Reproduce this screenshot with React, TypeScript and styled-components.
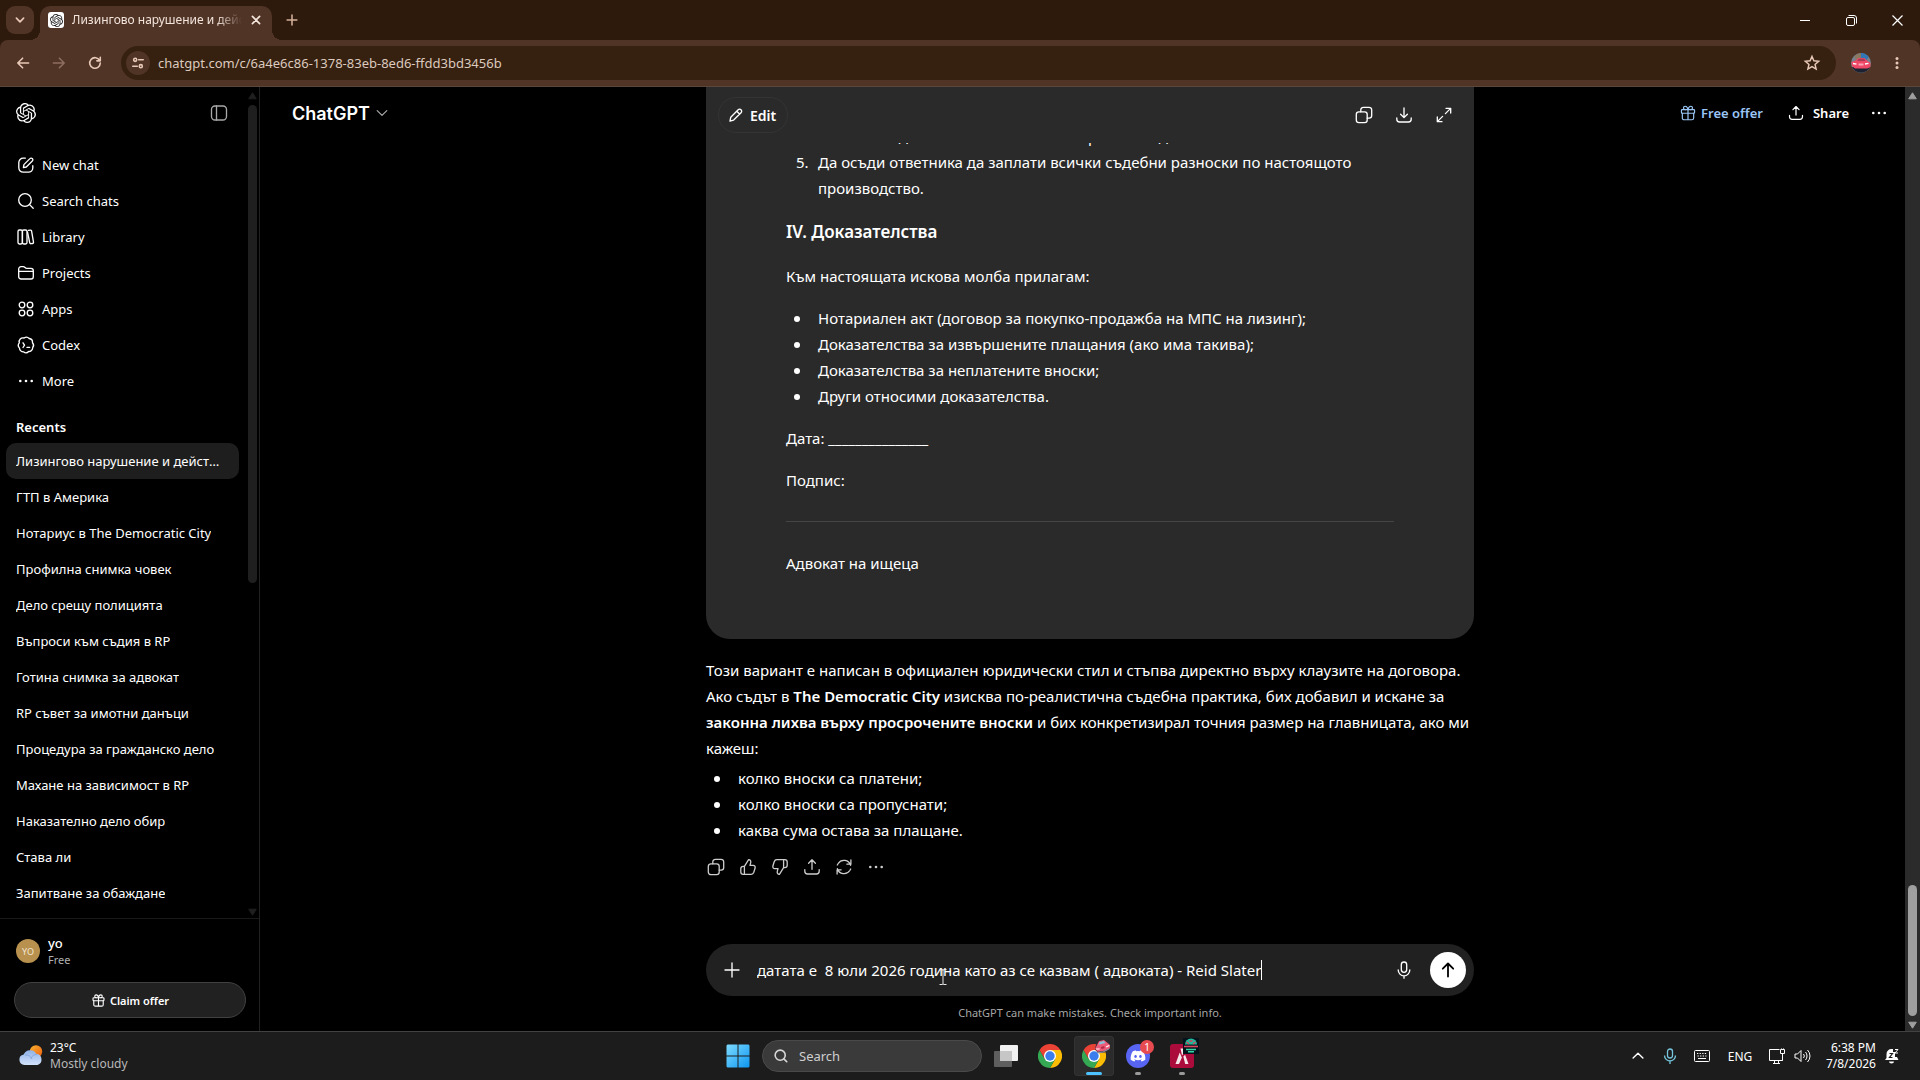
import React from "react";
import styled, { createGlobalStyle, css } from "styled-components";
import { SiOpenai } from "react-icons/si";
import { FaDiscord } from "react-icons/fa";

const GlobalStyle = createGlobalStyle`
  * { box-sizing: border-box; }
  html, body, #root { height: 100%; margin: 0; }
  body { background: #000; color: #fff; overflow: hidden; }
  body, button, input { font-family: "Noto Sans", "Open Sans", sans-serif; }
  button { background: none; border: 0; padding: 0; color: inherit; cursor: pointer; }
  a { color: inherit; text-decoration: none; }
  ul, ol, p, h1, h2, h3 { margin: 0; padding: 0; list-style: none; }
  svg { display: block; flex: none; }
`;

const Screen = styled.div`
  display: flex;
  flex-direction: column;
  height: 100vh;
`;

/* ---------- icons ---------- */

type IconProps = { size?: number; width?: number; children: React.ReactNode };

const Icon = ({ size = 20, width = 1.33, children }: IconProps) => (
  <svg width={size} height={size} viewBox="0 0 20 20" fill="none" stroke="currentColor"
    strokeWidth={width} strokeLinecap="round" strokeLinejoin="round" aria-hidden="true">
    {children}
  </svg>
);

const icons = {
  compose: <><path d="M9.3 3.2H7.2a4.4 4.4 0 0 0-4.4 4.4v5.2a4.4 4.4 0 0 0 4.4 4.4h5.2a4.4 4.4 0 0 0 4.4-4.4v-2.1" /><path d="M7.9 9.6l6-6a1.65 1.65 0 0 1 2.4 0 1.65 1.65 0 0 1 0 2.4l-6 6-2.9.6z" /></>,
  search: <><circle cx="9" cy="9" r="6.3" /><path d="M13.6 13.6l3.6 3.6" /></>,
  library: <><rect x="2" y="3" width="4.4" height="14" rx="1.4" /><rect x="6.4" y="3" width="4.6" height="14" rx="1.4" /><path d="M12.4 3.4l1.8-.3a1.2 1.2 0 0 1 1.4 1l1.9 11a1.2 1.2 0 0 1-1 1.4l-1.4.2a1.2 1.2 0 0 1-1.4-1L11.5 5" /></>,
  folder: <path d="M2.7 8.3h14.6M2.7 6a2.3 2.3 0 0 1 2.3-2.3h2.3c1.6 0 1.8 1.6 3.3 1.6H15a2.3 2.3 0 0 1 2.3 2.3v6.1a2.3 2.3 0 0 1-2.3 2.3H5a2.3 2.3 0 0 1-2.3-2.3z" />,
  apps: <><circle cx="6" cy="6" r="2.8" /><circle cx="14" cy="6" r="2.8" /><circle cx="6" cy="14" r="2.8" /><circle cx="14" cy="14" r="2.8" /></>,
  codex: <><path d="M8.1 3a3.9 3.9 0 0 1 5.1.5 3.9 3.9 0 0 1 3.3 4.2 3.9 3.9 0 0 1 .2 5 3.9 3.9 0 0 1-4 3.8 3.9 3.9 0 0 1-5.2.3 3.9 3.9 0 0 1-4-3.7 3.9 3.9 0 0 1-.2-5.2A3.9 3.9 0 0 1 8.1 3z" /><path d="M7 7.8l1.5 2.4L7 12.5M11 12.4h2.6" /></>,
  more: <g fill="currentColor" stroke="none"><circle cx="4.3" cy="10" r="1.3" /><circle cx="10" cy="10" r="1.3" /><circle cx="15.7" cy="10" r="1.3" /></g>,
  panel: <><rect x="2.5" y="3" width="15" height="14" rx="3.5" /><path d="M7.5 3v14" /></>,
  gift: <><rect x="2.7" y="6.3" width="14.6" height="4" rx="1" /><path d="M3.7 10.3v5.2a2 2 0 0 0 2 2h8.6a2 2 0 0 0 2-2v-5.2M10 6.3v11.2M10 6.3C9.5 3.8 8.3 2.5 6.9 2.5a1.9 1.9 0 0 0 0 3.8M10 6.3c.5-2.5 1.7-3.8 3.1-3.8a1.9 1.9 0 0 1 0 3.8" /></>,
  upload: <><path d="M10 12.3V3M6.6 6.2L10 2.8l3.4 3.4" /><path d="M2.8 12.6v1.6a2.8 2.8 0 0 0 2.8 2.8h8.8a2.8 2.8 0 0 0 2.8-2.8v-1.6" /></>,
  download: <><path d="M10 3v9.3M6.6 9.2l3.4 3.4 3.4-3.4" /><path d="M2.8 13v1.2a2.8 2.8 0 0 0 2.8 2.8h8.8a2.8 2.8 0 0 0 2.8-2.8V13" /></>,
  pencil: <path d="M3.3 16.7l.9-4.3 8.2-8.2a2.2 2.2 0 0 1 3.2 0 2.2 2.2 0 0 1 0 3.2l-8.2 8.2zM10.8 5.8L14 9" />,
  copy: <><rect x="2.3" y="6.8" width="10.9" height="10.9" rx="2.6" /><path d="M6.8 6.8V4.9a2.6 2.6 0 0 1 2.6-2.6h5.7a2.6 2.6 0 0 1 2.6 2.6v5.7a2.6 2.6 0 0 1-2.6 2.6h-1.9" /></>,
  expand: <path d="M12 3.3h4.7V8M16.4 3.6l-5 5M8 16.7H3.3V12M3.6 16.4l5-5" />,
  thumb: <path d="M6.4 9.3L10.6 2.7c1.8 0 2.5 1.5 2.1 3l-.7 2.6h3.1c1.6 0 2.4 1.3 2 2.7l-1.3 4.3c-.4 1.2-1.3 2-2.6 2H5.2a2.4 2.4 0 0 1-2.4-2.4v-3.2a2.4 2.4 0 0 1 2.4-2.4h1.2zM6.4 9.5v7.6" />,
  regen: <path d="M16.6 8.3A6.9 6.9 0 0 0 4.2 6.5L3.3 8M16.9 3v4.2h-4M3.4 11.7a6.9 6.9 0 0 0 12.4 1.8l.9-1.5M3.1 17v-4.2h4" />,
  chevron: <path d="M4 7l6 6 6-6" />,
  plus: <path d="M10 3v14M3 10h14" />,
  mic: <><rect x="7.3" y="2" width="5.4" height="10.3" rx="2.7" /><path d="M4.2 10a5.8 5.8 0 0 0 11.6 0M10 15.8v2.4" /></>,
  arrowUp: <path d="M10 16.5v-13M4.8 8.7L10 3.5l5.2 5.2" />,
  back: <path d="M17 10H3.5M9.5 4l-6 6 6 6" />,
  forward: <path d="M3 10h13.5M10.5 4l6 6-6 6" />,
  reload: <path d="M15.8 6.8A6.6 6.6 0 1 0 16.6 10M16.6 3v4.3h-4.3" />,
  tune: <><circle cx="6" cy="5.5" r="2.2" /><path d="M11 5.5h6.5M2.5 14.5H9" /><circle cx="14" cy="14.5" r="2.2" /></>,
  star: <path strokeLinejoin="miter" d="M10 2.7l2.1 4.9 5.3.5-4 3.5 1.2 5.2-4.6-2.800-4.6 2.800 1.200-5.200-4-3.500 5.300-.5z" />,
  close: <path d="M4 4l12 12M16 4L4 16" />,
};

/* ---------- browser window ---------- */

const TabStrip = styled.div`
  display: flex;
  align-items: center;
  height: 40px;
  flex: none;
  padding-left: 6px;
  background: #2d1a0d;
  color: #e9c9b8;
`;

const TabSearch = styled.button`
  display: grid;
  place-items: center;
  width: 28px;
  height: 28px;
  border-radius: 9px;
  background: #503426;
`;

const Tab = styled.div`
  position: relative;
  display: flex;
  align-items: center;
  gap: 8px;
  align-self: flex-end;
  width: 232px;
  height: 34px;
  margin-left: 6px;
  padding: 0 10px 6px 8px;
  border-radius: 10px 10px 0 0;
  background: #503426;
  color: #f3e4dc;

  &::before, &::after {
    content: "";
    position: absolute;
    bottom: 0;
    width: 10px;
    height: 10px;
  }
  &::before { left: -10px; background: radial-gradient(circle at 0 0, transparent 10px, #503426 10px); }
  &::after { right: -10px; background: radial-gradient(circle at 100% 0, transparent 10px, #503426 10px); }
`;

const Favicon = styled.span`
  display: grid;
  place-items: center;
  width: 16px;
  height: 16px;
  flex: none;
  border-radius: 3px;
  background: #fff;
  color: #222;
`;

const TabTitle = styled.span`
  flex: 1;
  overflow: hidden;
  white-space: nowrap;
  font-size: 12px;
  line-height: 16px;
  mask-image: linear-gradient(90deg, #000 85%, transparent);
`;

const NewTab = styled.button`
  margin-left: 13px;
  color: #d5b09c;
`;

const WindowControls = styled.div`
  display: flex;
  margin-left: auto;
  color: #fff;
`;

const WindowButton = styled.button`
  display: grid;
  place-items: center;
  width: 46px;
  height: 28px;
`;

const Toolbar = styled.div`
  display: flex;
  align-items: center;
  height: 47px;
  flex: none;
  padding: 0 15px 0 13px;
  border-bottom: 1px solid #5b463b;
  border-radius: 8px 8px 0 0;
  background: #503426;
  color: #e9c9b8;
`;

const ToolbarBackdrop = styled.div`
  background: #2d1a0d;
`;

const NavButton = styled.button`
  display: grid;
  place-items: center;
  width: 20px;
  height: 34px;
  margin-right: 16px;
  &:disabled { color: #8d6e60; }
`;

const Omnibox = styled.label`
  display: flex;
  align-items: center;
  flex: 1;
  height: 34px;
  margin-right: 15px;
  padding: 0 15px 0 5px;
  gap: 8px;
  border-radius: 17px;
  background: #36200f;
`;

const SiteInfo = styled.span`
  display: grid;
  place-items: center;
  width: 24px;
  height: 24px;
  border-radius: 50%;
  background: #503426;
`;

const AddressInput = styled.input`
  flex: 1;
  min-width: 0;
  padding: 0;
  border: 0;
  outline: 0;
  background: none;
  color: #dccabf;
  font-size: 13px;
`;

const ProfileButton = styled.button`
  margin-right: 18px;
`;

/* ---------- page ---------- */

const Page = styled.div`
  display: flex;
  flex: 1;
  min-height: 0;
`;

const SidebarBox = styled.aside`
  display: flex;
  flex-direction: column;
  width: 260px;
  flex: none;
  border-right: 1px solid #212121;
`;

const SidebarTop = styled.div`
  display: flex;
  flex: 1;
  min-height: 0;
  overflow: hidden;
`;

const SidebarContent = styled.div`
  flex: 1;
  min-width: 0;
  padding: 0 9px 0 6px;
`;

const SidebarHeader = styled.div`
  display: flex;
  align-items: center;
  justify-content: space-between;
  height: 52px;
  margin-bottom: 8px;
  padding: 0 10px;
`;

const SidebarToggle = styled.button`
  color: #a8a8a8;
`;

const sideRow = css`
  display: flex;
  align-items: center;
  gap: 6px;
  height: 36px;
  padding: 0 15px 0 10px;
  border-radius: 10px;
  font-size: 13px;
  line-height: 20px;
`;

const NavLink = styled.a`
  ${sideRow}
`;

const RecentsTitle = styled.h2`
  margin: 18px 0 6px;
  padding: 0 10px;
  font-size: 13px;
  font-weight: 600;
  line-height: 20px;
`;

const ChatLink = styled.a<{ $active?: boolean }>`
  ${sideRow}
  background: ${(p) => (p.$active ? "#1e1e1e" : "none")};
  span {
    overflow: hidden;
    white-space: nowrap;
    text-overflow: ellipsis;
  }
`;

const ScrollTrack = styled.div<{ $main?: boolean }>`
  display: flex;
  flex-direction: column;
  align-items: ${(p) => (p.$main ? "center" : "flex-start")};
  width: ${(p) => (p.$main ? 15 : 11)}px;
  flex: none;
  padding: 5px 0 2px;
  gap: 5px;
  background: ${(p) => (p.$main ? "#2b2b2b" : "none")};
  color: ${(p) => (p.$main ? "#9f9f9f" : "#1f1f1f")};
`;

const ScrollThumb = styled.div<{ $size: number }>`
  width: 9px;
  height: ${(p) => p.$size}%;
  border-radius: 5px;
  background: currentColor;
`;

const ScrollSpace = styled.div`
  flex: 1;
`;

const Account = styled.div`
  padding: 14px 13px 13px 14px;
  border-top: 1px solid #191919;
`;

const AccountRow = styled.button`
  display: flex;
  align-items: center;
  gap: 8px;
  height: 36px;
  margin-bottom: 13px;
  padding: 0 2px;
  text-align: left;
`;

const Avatar = styled.span`
  display: grid;
  place-items: center;
  width: 24px;
  height: 24px;
  border-radius: 50%;
  background: #b8914f;
  color: #f3e6cf;
  font-size: 9px;
`;

const AccountName = styled.span`
  display: block;
  font-size: 13px;
  font-weight: 500;
  line-height: 18px;
`;

const AccountPlan = styled.span`
  display: block;
  color: #afafaf;
  font-size: 11px;
  line-height: 16px;
`;

const ClaimButton = styled.button`
  display: flex;
  align-items: center;
  justify-content: center;
  gap: 4px;
  width: 100%;
  height: 36px;
  border: 1px solid #414141;
  border-radius: 18px;
  background: #212121;
  font-size: 11px;
  font-weight: 600;
`;

const Main = styled.main`
  display: grid;
  grid-template-columns: 1fr minmax(0, 768px) 1fr;
  flex: 1;
  min-width: 0;
`;

const ModelButton = styled.button`
  display: flex;
  align-items: center;
  gap: 4px;
  height: 52px;
  margin-left: 32px;
  font-family: Inter, "Liberation Sans", sans-serif;
  font-size: 18px;
  font-weight: 600;
  svg { color: #a8a8a8; }
`;

const RightSide = styled.div`
  display: flex;
  justify-content: flex-end;
  min-width: 0;
`;

const HeaderActions = styled.div`
  display: flex;
  align-items: center;
  height: 52px;
  gap: 24px;
  padding-right: 16px;
`;

const HeaderButton = styled.button<{ $accent?: boolean; $gap: number }>`
  display: flex;
  align-items: center;
  gap: ${(p) => p.$gap}px;
  color: ${(p) => (p.$accent ? "#9ac5f5" : "#fff")};
  font-size: 13px;
  font-weight: 600;
`;

const OptionsButton = styled.button`
  margin-left: -4px;
`;

const Thread = styled.section`
  display: flex;
  flex-direction: column;
  min-height: 0;
  font-size: 15px;
  line-height: 26px;
`;

const DocumentCard = styled.article`
  border-radius: 0 0 24px 24px;
  background: #2a2a2a;
`;

const DocumentBar = styled.div`
  display: flex;
  align-items: center;
  justify-content: space-between;
  height: 56px;
  padding: 0 20px 0 12px;
`;

const EditButton = styled.button`
  display: flex;
  align-items: center;
  gap: 5px;
  height: 36px;
  padding: 0 11px 0 8px;
  border: 1px solid #343434;
  border-radius: 18px;
  font-size: 14px;
  font-weight: 600;
`;

const IconRow = styled.div`
  display: flex;
  gap: 20px;
`;

const DocumentBody = styled.div`
  overflow: hidden;
  padding: 0 80px 63px;
  p { margin-top: 16px; }
`;

const OrderedList = styled.ol`
  margin-top: -20px;
  li { display: flex; }
  li > span { width: 32px; flex: none; padding-left: 10px; }
`;

const Heading = styled.h3`
  margin-top: 16px;
  font-size: 17px;
  font-weight: 600;
  line-height: 30px;
`;

const BulletList = styled.ul<{ $gap: number }>`
  margin-top: ${(p) => p.$gap}px;
  li { display: flex; }
  li::before {
    content: "";
    width: 6px;
    height: 6px;
    margin: 11px 18px 0 8px;
    border-radius: 50%;
    background: #fff;
  }
`;

const Rule = styled.hr`
  height: 1px;
  margin: 28px 0;
  border: 0;
  background: #454545;
`;

const Answer = styled.p`
  margin-top: 18px;
  strong { font-weight: 600; }
`;

const ReplyActions = styled.div`
  display: flex;
  margin-top: 8px;
  color: #cdcdcd;
`;

const ReplyButton = styled.button`
  display: grid;
  place-items: center;
  width: 32px;
  height: 32px;
  margin-left: -6px;
  margin-right: 6px;
`;

const Composer = styled.form`
  display: flex;
  align-items: center;
  height: 52px;
  margin-top: auto;
  padding: 0 8px 0 16px;
  border-radius: 26px;
  background: #212121;
`;

const PromptArea = styled.div`
  position: relative;
  display: flex;
  align-items: center;
  flex: 1;
  min-width: 0;
  margin-left: 15px;
`;

const PromptInput = styled.input`
  field-sizing: content;
  padding: 0;
  border: 0;
  outline: 0;
  background: none;
  color: #fff;
  font-size: 15px;
  line-height: 26px;
`;

const Caret = styled.span`
  width: 1px;
  height: 20px;
  background: #fff;
`;

const Pointer = styled.svg`
  position: absolute;
  left: 182px;
  top: 12px;
`;

const SendButton = styled.button`
  display: grid;
  place-items: center;
  width: 36px;
  height: 36px;
  margin-left: 16px;
  border-radius: 50%;
  background: #fff;
  color: #000;
`;

const Disclaimer = styled.p`
  padding: 9px 0 10px;
  color: #a6a6a6;
  font-size: 11px;
  line-height: 16px;
  text-align: center;
`;

/* ---------- taskbar ---------- */

const Taskbar = styled.footer`
  display: grid;
  grid-template-columns: 1fr auto 1fr;
  align-items: center;
  height: 49px;
  flex: none;
  border-top: 1px solid #424242;
  background: #1c1c1c;
`;

const Weather = styled.button`
  display: flex;
  align-items: center;
  justify-self: start;
  gap: 6px;
  margin-left: 18px;
  text-align: left;
  font-size: 12px;
  line-height: 16px;
  span { display: block; }
  span + span { color: #b9b9b9; }
`;

const AppRow = styled.div`
  display: flex;
  align-items: center;
  gap: 4px;
`;

const AppButton = styled.button<{ $active?: boolean; $mark?: string; $markWidth?: number }>`
  position: relative;
  display: grid;
  place-items: center;
  width: 40px;
  height: 40px;
  border-radius: 4px;
  background: ${(p) => (p.$active ? "#2b2b2b" : "none")};
  box-shadow: ${(p) => (p.$active ? "inset 0 0 0 1px #333" : "none")};
  &::after {
    content: "";
    position: absolute;
    bottom: 1px;
    width: ${(p) => p.$markWidth ?? 0}px;
    height: 3px;
    border-radius: 2px;
    background: ${(p) => p.$mark ?? "none"};
  }
`;

const Overlay = styled.span<{ $right: number }>`
  position: absolute;
  top: 2px;
  right: ${(p) => p.$right}px;
`;

const CountBadge = styled.span`
  position: absolute;
  top: 4px;
  right: 4px;
  width: 14px;
  height: 14px;
  border-radius: 50%;
  background: #e84b4f;
  font-size: 10px;
  line-height: 14px;
`;

const DiscordDisc = styled.span`
  display: grid;
  place-items: center;
  width: 24px;
  height: 24px;
  border-radius: 50%;
  background: #5865f2;
`;

const TaskSearch = styled.label`
  display: flex;
  align-items: center;
  gap: 10px;
  width: 220px;
  height: 32px;
  padding: 0 10px;
  border: 1px solid #4a4a4a;
  border-radius: 16px;
  background: #3a3a3a;
  color: #d8d8d8;
  input {
    flex: 1;
    min-width: 0;
    padding: 0;
    border: 0;
    outline: 0;
    background: none;
    color: #fff;
    font-size: 13px;
  }
  input::placeholder { color: #cfcfcf; opacity: 1; }
`;

const Tray = styled.div`
  display: flex;
  align-items: center;
  justify-self: end;
  padding-right: 20px;
`;

const TrayButton = styled.button<{ $w?: number }>`
  display: grid;
  place-items: center;
  width: ${(p) => p.$w ?? 32}px;
  height: 32px;
  font-size: 12px;
`;

const Clock = styled.button`
  width: 64px;
  margin-right: 8px;
  font-size: 12px;
  line-height: 16px;
  text-align: right;
  span { display: block; }
`;

/* ---------- drawings ---------- */

const CarPicture = ({ size, round }: { size: number; round?: boolean }) => (
  <svg width={size} height={size} viewBox="0 0 20 20" aria-hidden="true">
    {round ? (
      <>
        <circle cx="10" cy="10" r="10" fill="#77808c" />
        <path d="M9 0a10 10 0 0 1 8.500 4L15 8H9z" fill="#3277b5" />
        <path d="M3.500 3.500A10 10 0 0 1 10 0v7H5z" fill="#8b7860" />
        <path d="M1 14h18a10 10 0 0 1-18 0z" fill="#1c2230" />
        <path d="M.5 9l4-1.500L7.500 5h6l3 3 3 2-.2 4-3 1.500H4L.8 13z" fill="#ef4766" />
        <path d="M6 8l2-2.300h5L14.500 8z" fill="#a83a56" />
        <path d="M2 10.500l3.500.6M14 11l3.500-.6" stroke="#fff" strokeWidth="1.300" />
        <path d="M7.500 10.500h5v2h-5z" fill="#f9a5b5" />
      </>
    ) : (
      <g transform="rotate(-14 10 10)">
        <path d="M.5 11L3 6.500C5 2.500 8 1.500 12 2c4 .5 6 3.500 7 8l-1 5-7 2.500-8-1z" fill="#3b2c35" />
        <path d="M1 10.500l3-3.500 3.500-4h6l3 4 2.500 3.500-1 3.500-7 1.500-8-1z" fill="#ee5b78" />
        <path d="M6 7l2-3h5l1.500 3z" fill="#83c4da" />
        <path d="M2 11l4 1M14 11.500l4-.8" stroke="#fff" strokeWidth="1.300" />
        <path d="M3 15.500l6 1 8-2" stroke="#99a2b5" strokeWidth="1" fill="none" />
        <path d="M8 10h4v2.500H8z" fill="#b32d4b" />
      </g>
    )}
  </svg>
);

const ChromeLogo = () => (
  <svg width="24" height="24" viewBox="0 0 24 24" aria-hidden="true">
    <path d="M12 6h10.400A12 12 0 0 1 12 24l5.200-9z" fill="#fbbc04" />
    <path d="M1.600 6A12 12 0 0 0 12 24l5.200-9H6.800z" fill="#34a853" />
    <path d="M1.600 6a12 12 0 0 1 20.800 0H12L6.800 15z" fill="#ea4335" />
    <circle cx="12" cy="12" r="6" fill="#fff" />
    <circle cx="12" cy="12" r="4.700" fill="#3b7ded" />
  </svg>
);

const WeatherPicture = () => (
  <svg width="26" height="24" viewBox="0 0 26 24" aria-hidden="true">
    <defs>
      <linearGradient id="sun" x1="0" y1="0" x2="1" y2="1"><stop stopColor="#f9b32f" /><stop offset="1" stopColor="#ef5f12" /></linearGradient>
      <linearGradient id="cloud" x1="0" y1="0" x2="0" y2="1"><stop stopColor="#8fb2e8" /><stop offset="1" stopColor="#d3e2fb" /></linearGradient>
    </defs>
    <circle cx="18" cy="7.500" r="6.200" fill="url(#sun)" />
    <path d="M6.500 21a5.300 5.300 0 0 1-.8-10.500 7 7 0 0 1 12.500-.8A5.800 5.800 0 0 1 19.500 21z" fill="url(#cloud)" />
    <path d="M7 11a7 7 0 0 1 7 4M19 10.500a6 6 0 0 0-6 4" fill="none" stroke="#86a9e0" />
  </svg>
);

const StartLogo = () => (
  <svg width="24" height="24" viewBox="0 0 24 24" aria-hidden="true">
    <defs><linearGradient id="win" x1="0" y1="0" x2="24" y2="24" gradientUnits="userSpaceOnUse"><stop stopColor="#80dcff" /><stop offset="1" stopColor="#0b95f0" /></linearGradient></defs>
    <path d="M1.500 .5h10v11H.5v-10zM12.500 .5h10l1 1v10h-11zM.5 12.500h11v11h-10l-1-1zM12.500 12.500h11v10l-1 1h-10z" fill="url(#win)" />
  </svg>
);

const TaskViewLogo = () => (
  <svg width="24" height="24" viewBox="0 0 24 24" aria-hidden="true">
    <rect x="6" y="1" width="18" height="16" rx="1" fill="#f1f1f1" />
    <rect x="0" y="7" width="18" height="16" rx="1" fill="#5f5f5f" />
    <rect x="6" y="7" width="12" height="10" fill="#c6c6c6" />
  </svg>
);

const LauncherLogo = () => (
  <svg width="24" height="24" viewBox="0 0 24 24" aria-hidden="true">
    <rect width="24" height="24" rx="3" fill="#ab0c3b" />
    <path d="M10.500 4.500h2.600l1.300 4-2.400 3zM9.700 8.500l2.200 5L9 20H5.500zM13.300 12.500l1.800-1.800L18.500 20h-3.300z" fill="#f5e8ea" />
  </svg>
);

const ServerBadge = () => (
  <svg width="16" height="16" viewBox="0 0 16 16" aria-hidden="true">
    <rect width="16" height="16" fill="#04121c" />
    <path d="M2 6.500a6 6 0 0 1 12 0z" fill="#22b99a" />
    <path d="M3.500 4l2.500 2M10 6l2.500-2M6.500 3h3" stroke="#d9405a" strokeWidth="1.300" />
    <path d="M1 8.500h14" stroke="#d7475f" strokeWidth="1.600" />
    <path d="M3 11.500h10M5 13.700h6" stroke="#35d6a6" strokeWidth="1.400" />
  </svg>
);

const UpArrow = () => <svg width="9" height="8" viewBox="0 0 9 8" aria-hidden="true"><path d="M4.500 .8L8.300 6.800H.7z" fill="currentColor" stroke="currentColor" strokeLinejoin="round" /></svg>;
const DownArrow = () => <svg width="9" height="8" viewBox="0 0 9 8" aria-hidden="true"><path d="M4.500 7.200L8.300 1.200H.7z" fill="currentColor" stroke="currentColor" strokeLinejoin="round" /></svg>;

/* ---------- content ---------- */

const navItems: [string, React.ReactNode][] = [
  ["New chat", icons.compose],
  ["Search chats", icons.search],
  ["Library", icons.library],
  ["Projects", icons.folder],
  ["Apps", icons.apps],
  ["Codex", icons.codex],
  ["More", icons.more],
];

const chats = [
  "Лизингово нарушение и действия",
  "ГТП в Америка",
  "Нотариус в The Democratic City",
  "Профилна снимка човек",
  "Дело срещу полицията",
  "Въпроси към съдия в RP",
  "Готина снимка за адвокат",
  "RP съвет за имотни данъци",
  "Процедура за гражданско дело",
  "Махане на зависимост в RP",
  "Наказателно дело обир",
  "Става ли",
  "Запитване за обаждане",
];

const BrowserChrome = () => (
  <>
    <TabStrip>
      <TabSearch aria-label="Search tabs"><Icon size={12} width={2.8}>{icons.chevron}</Icon></TabSearch>
      <Tab>
        <Favicon><SiOpenai size={13} /></Favicon>
        <TabTitle>Лизингово нарушение и действия</TabTitle>
        <button aria-label="Close tab"><Icon size={12} width={2.8}>{icons.close}</Icon></button>
      </Tab>
      <NewTab aria-label="New tab"><Icon size={14} width={2.2}>{icons.plus}</Icon></NewTab>
      <WindowControls>
        <WindowButton aria-label="Minimize"><svg width="10" height="10"><path d="M0 5.5h10" stroke="currentColor" /></svg></WindowButton>
        <WindowButton aria-label="Restore"><svg width="11" height="11" fill="none" stroke="currentColor"><rect x=".5" y="2.5" width="8" height="8" rx="1.5" /><path d="M2.5 .5H8a2.5 2.5 0 0 1 2.5 2.5v5.5" /></svg></WindowButton>
        <WindowButton aria-label="Close"><svg width="11" height="11" stroke="currentColor" strokeWidth="1.2"><path d="M.5 .5l10 10M10.5 .5l-10 10" /></svg></WindowButton>
      </WindowControls>
    </TabStrip>
    <ToolbarBackdrop>
      <Toolbar>
        <NavButton aria-label="Back"><Icon size={16} width={2}>{icons.back}</Icon></NavButton>
        <NavButton aria-label="Forward" disabled><Icon size={16} width={2}>{icons.forward}</Icon></NavButton>
        <NavButton aria-label="Reload"><Icon size={16} width={2}>{icons.reload}</Icon></NavButton>
        <Omnibox>
          <SiteInfo><Icon size={14} width={2.2}>{icons.tune}</Icon></SiteInfo>
          <AddressInput aria-label="Address" defaultValue="chatgpt.com/c/6a4e6c86-1378-83eb-8ed6-ffdd3bd3456b" />
          <button aria-label="Bookmark this page"><Icon size={18} width={1.6}>{icons.star}</Icon></button>
        </Omnibox>
        <ProfileButton aria-label="Profile"><CarPicture size={20} round /></ProfileButton>
        <button aria-label="Browser menu"><svg width="16" height="16" fill="currentColor"><circle cx="8" cy="3.500" r="1.500" /><circle cx="8" cy="8" r="1.500" /><circle cx="8" cy="12.500" r="1.500" /></svg></button>
      </Toolbar>
    </ToolbarBackdrop>
  </>
);

const Sidebar = () => (
  <SidebarBox>
    <SidebarTop>
      <SidebarContent>
        <SidebarHeader>
          <a href="#home" aria-label="Home"><SiOpenai size={20} /></a>
          <SidebarToggle aria-label="Close sidebar"><Icon>{icons.panel}</Icon></SidebarToggle>
        </SidebarHeader>
        <nav>
          {navItems.map(([label, glyph]) => (
            <NavLink href="#nav" key={label}><Icon>{glyph}</Icon>{label}</NavLink>
          ))}
        </nav>
        <RecentsTitle>Recents</RecentsTitle>
        {chats.map((title, i) => (
          <ChatLink href="#chat" key={title} $active={i === 0}><span>{title}</span></ChatLink>
        ))}
      </SidebarContent>
      <ScrollTrack>
        <UpArrow />
        <ScrollThumb $size={58} />
        <ScrollSpace />
        <DownArrow />
      </ScrollTrack>
    </SidebarTop>
    <Account>
      <AccountRow>
        <Avatar>YO</Avatar>
        <span><AccountName>yo</AccountName><AccountPlan>Free</AccountPlan></span>
      </AccountRow>
      <ClaimButton><Icon size={15} width={1.5}>{icons.gift}</Icon>Claim offer</ClaimButton>
    </Account>
  </SidebarBox>
);

const Document = () => (
  <DocumentCard>
    <DocumentBar>
      <EditButton><Icon size={18} width={1.5}>{icons.pencil}</Icon>Edit</EditButton>
      <IconRow>
        <button aria-label="Copy"><Icon>{icons.copy}</Icon></button>
        <button aria-label="Download"><Icon>{icons.download}</Icon></button>
        <button aria-label="Expand"><Icon>{icons.expand}</Icon></button>
      </IconRow>
    </DocumentBar>
    <DocumentBody>
      <OrderedList>
        <li><span />вземането дължимо неизплатено в срока към дата</li>
        <li><span>5.</span>Да осъди ответника да заплати всички съдебни разноски по настоящото производство.</li>
      </OrderedList>
      <Heading>IV. Доказателства</Heading>
      <p>Към настоящата искова молба прилагам:</p>
      <BulletList $gap={16}>
        <li>Нотариален акт (договор за покупко-продажба на МПС на лизинг);</li>
        <li>Доказателства за извършените плащания (ако има такива);</li>
        <li>Доказателства за неплатените вноски;</li>
        <li>Други относими доказателства.</li>
      </BulletList>
      <p>Дата: _______________</p>
      <p>Подпис:</p>
      <Rule />
      <div>Адвокат на ищеца</div>
    </DocumentBody>
  </DocumentCard>
);

const Chat = () => (
  <Main>
    <div>
      <ModelButton>ChatGPT<Icon size={16} width={1.5}>{icons.chevron}</Icon></ModelButton>
    </div>
    <Thread>
      <Document />
      <Answer>
        Този вариант е написан в официален юридически стил и стъпва директно върху клаузите на договора. Ако съдът в <strong>The Democratic City</strong> изисква по-реалистична съдебна практика, бих добавил и искане за <strong>законна лихва върху просрочените вноски</strong> и бих конкретизирал точния размер на главницата, ако ми кажеш:
      </Answer>
      <BulletList $gap={4}>
        <li>колко вноски са платени;</li>
        <li>колко вноски са пропуснати;</li>
        <li>каква сума остава за плащане.</li>
      </BulletList>
      <ReplyActions>
        <ReplyButton aria-label="Copy"><Icon width={1.3}>{icons.copy}</Icon></ReplyButton>
        <ReplyButton aria-label="Good response"><Icon width={1.3}>{icons.thumb}</Icon></ReplyButton>
        <ReplyButton aria-label="Bad response"><Icon width={1.3}><g transform="rotate(180 10 10)">{icons.thumb}</g></Icon></ReplyButton>
        <ReplyButton aria-label="Share"><Icon width={1.3}>{icons.upload}</Icon></ReplyButton>
        <ReplyButton aria-label="Try again"><Icon width={1.3}>{icons.regen}</Icon></ReplyButton>
        <ReplyButton aria-label="More"><Icon>{icons.more}</Icon></ReplyButton>
      </ReplyActions>
      <Composer onSubmit={(e) => e.preventDefault()}>
        <button type="button" aria-label="Add files"><Icon>{icons.plus}</Icon></button>
        <PromptArea>
          <PromptInput aria-label="Message" defaultValue="датата е  8 юли 2026 година като аз се казвам ( адвоката) - Reid Slater" />
          <Caret />
          <Pointer width="8" height="16" fill="none" stroke="#e8e8e8"><path d="M.5 .5h3l.5 1 .5-1h3M4 1v13.5M.5 15.5h3l.5-1 .5 1h3" /></Pointer>
        </PromptArea>
        <button type="button" aria-label="Dictate"><Icon>{icons.mic}</Icon></button>
        <SendButton aria-label="Send"><Icon width={1.8}>{icons.arrowUp}</Icon></SendButton>
      </Composer>
      <Disclaimer>ChatGPT can make mistakes. Check important info.</Disclaimer>
    </Thread>
    <RightSide>
      <HeaderActions>
        <HeaderButton $accent $gap={4}><Icon size={18}>{icons.gift}</Icon>Free offer</HeaderButton>
        <HeaderButton $gap={8}><Icon size={18}>{icons.upload}</Icon>Share</HeaderButton>
        <OptionsButton aria-label="Conversation options"><Icon>{icons.more}</Icon></OptionsButton>
      </HeaderActions>
      <ScrollTrack $main>
        <UpArrow />
        <ScrollSpace />
        <ScrollThumb $size={14} />
        <DownArrow />
      </ScrollTrack>
    </RightSide>
  </Main>
);

const SystemTaskbar = () => (
  <Taskbar>
    <Weather><WeatherPicture /><span><span>23°C</span><span>Mostly cloudy</span></span></Weather>
    <AppRow>
      <AppButton aria-label="Start"><StartLogo /></AppButton>
      <TaskSearch>
        <Icon size={16} width={2}>{icons.search}</Icon>
        <input type="text" placeholder="Search" aria-label="Search" />
      </TaskSearch>
      <AppButton aria-label="Task view"><TaskViewLogo /></AppButton>
      <AppButton aria-label="Chrome"><ChromeLogo /></AppButton>
      <AppButton aria-label="Chrome window" $active $mark="#4cc2ff" $markWidth={16}>
        <ChromeLogo />
        <Overlay $right={3}><CarPicture size={17} /></Overlay>
      </AppButton>
      <AppButton aria-label="Discord" $mark="#9a9a9a" $markWidth={6}>
        <DiscordDisc><FaDiscord size={16} /></DiscordDisc>
        <CountBadge>1</CountBadge>
      </AppButton>
      <AppButton aria-label="Game launcher" $mark="#9a9a9a" $markWidth={6}>
        <LauncherLogo />
        <Overlay $right={3}><ServerBadge /></Overlay>
      </AppButton>
    </AppRow>
    <Tray>
      <TrayButton aria-label="Hidden icons"><Icon size={14} width={2}><path d="M3 13l7-7 7 7" /></Icon></TrayButton>
      <TrayButton aria-label="Microphone"><svg width="16" height="16" viewBox="0 0 16 16" fill="none" stroke="#76c5dc" strokeWidth="1.3"><rect x="5.5" y="1" width="5" height="9" rx="2.5" /><path d="M2.5 7.5a5.5 5.5 0 0 0 11 0M8 13v3" /></svg></TrayButton>
      <TrayButton aria-label="Touch keyboard"><svg width="16" height="12" viewBox="0 0 16 12" fill="none" stroke="#fff"><rect x=".5" y=".5" width="15" height="11" rx="1" /><path d="M3 3.5h10M3.5 6h9" strokeDasharray="1.3 1.3" /><path d="M4 8.5h8" /></svg></TrayButton>
      <TrayButton $w={44}>ENG</TrayButton>
      <TrayButton aria-label="Network" $w={30}><svg width="17" height="17" viewBox="0 0 17 17" fill="none" stroke="#fff"><path d="M10.5 1.5h-10v11h13V8M4 15.5h7M5.5 12.5v3M9.5 12.5v3M11.5 1.500h4v4h-4zM13.500 5.500v7M12.500 .5v1M14.500 .5v1" /></svg></TrayButton>
      <TrayButton aria-label="Volume" $w={20}><svg width="17" height="16" viewBox="0 0 17 16" fill="none" stroke="#fff" strokeLinejoin="round"><path d="M1 6h2.5L7 2.5v11L3.5 10H1zM9.5 6a3 3 0 0 1 0 4M11.5 4a6 6 0 0 1 0 8M13.5 2a8.5 8.5 0 0 1 0 12" /></svg></TrayButton>
      <Clock><span>6:38 PM</span><span>7/8/2026</span></Clock>
      <button aria-label="Notifications"><svg width="16" height="16" viewBox="0 0 16 16"><path d="M2.5 10V6a5 5 0 0 1 5-5H9v3h2v5h2l1.500 3H1zM5 13.500h5a2.500 2 0 0 1-5 0z" fill="#fff" /><path d="M5.500 5.500h3l-3 4h3" stroke="#1c1c1c" fill="none" strokeWidth="1.200" /><path d="M11 1.500h3l-3 3.500h3" stroke="#fff" fill="none" /></svg></button>
    </Tray>
  </Taskbar>
);

export default function App() {
  return (
    <Screen>
      <GlobalStyle />
      <BrowserChrome />
      <Page>
        <Sidebar />
        <Chat />
      </Page>
      <SystemTaskbar />
    </Screen>
  );
}
